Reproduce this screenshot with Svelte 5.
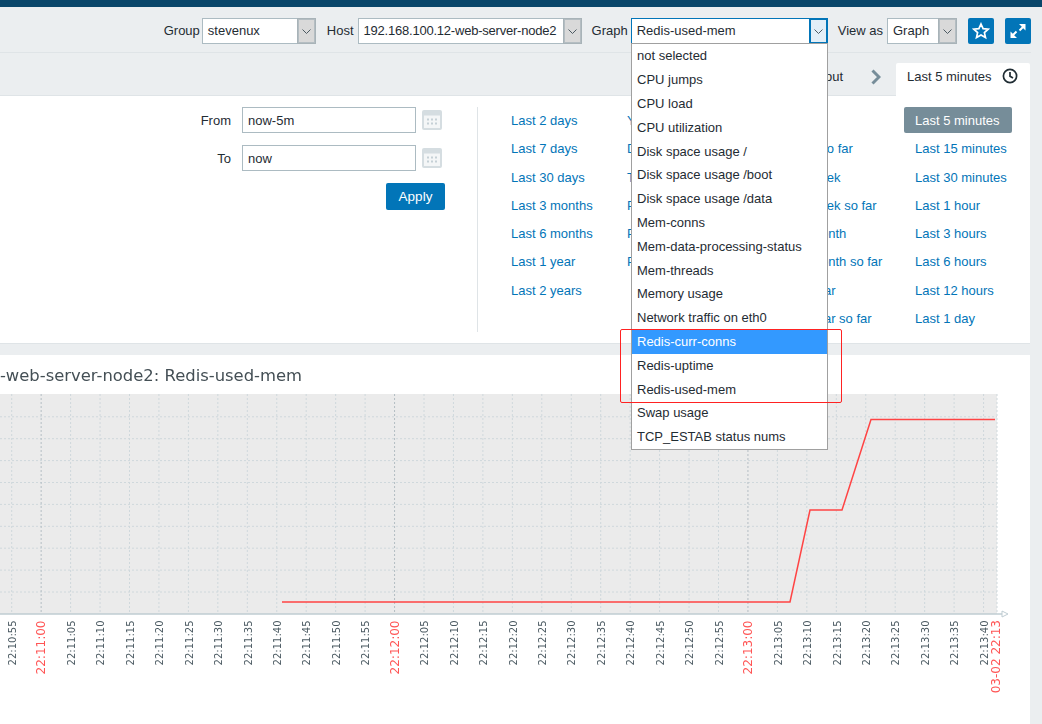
<script lang="ts">
  const graphs = [
    "not selected", "CPU jumps", "CPU load", "CPU utilization", "Disk space usage /",
    "Disk space usage /boot", "Disk space usage /data", "Mem-conns", "Mem-data-processing-status",
    "Mem-threads", "Memory usage", "Network traffic on eth0", "Redis-curr-conns",
    "Redis-uptime", "Redis-used-mem", "Swap usage", "TCP_ESTAB status nums",
  ];

  const quick = [
    ["Last 2 days", "Last 7 days", "Last 30 days", "Last 3 months", "Last 6 months", "Last 1 year", "Last 2 years"],
    ["Yesterday", "Day before yesterday", "This day last week", "Previous week", "Previous month", "Previous year"],
    ["Today", "Today so far", "This week", "This week so far", "This month", "This month so far", "This year", "This year so far"],
    ["Last 5 minutes", "Last 15 minutes", "Last 30 minutes", "Last 1 hour", "Last 3 hours", "Last 6 hours", "Last 12 hours", "Last 1 day"],
  ];

  // Graph coordinates below are page coordinates, the svg viewBox starts at y=355
  const step = 29.45;
  const ticks = Array.from({ length: 34 }, (_, i) => {
    const total = 10 * 60 + 55 + i * 5;
    const m = Math.floor(total / 60);
    const s = total % 60;
    const label = `22:${String(m).padStart(2, "0")}:${String(s).padStart(2, "0")}`;
    return { x: 11.7 + i * step, label, major: s === 0 };
  });
  const rows = Array.from({ length: 9 }, (_, i) => 416.8 + i * 21.9);
  const line = "282,602 790,602 810,510 842,510 871,419.5 995,419.5";
</script>

<div class="page">
  <div class="topbar"></div>

  <header class="filter">
    <div class="field group-field">
      <span>Group</span>
      <div class="select group"><span class="value">stevenux</span><span class="arrow"><svg width="9" height="5" viewBox="0 0 9 5"><path d="M.5.5l4 4 4-4" /></svg></span></div>
    </div>
    <div class="field host-field">
      <span>Host</span>
      <div class="select host"><span class="value tight">192.168.100.12-web-server-node2</span><span class="arrow"><svg width="9" height="5" viewBox="0 0 9 5"><path d="M.5.5l4 4 4-4" /></svg></span></div>
    </div>
    <div class="field graph-field">
      <span>Graph</span>
      <div class="select graph focus"><span class="value">Redis-used-mem</span><span class="arrow"><svg width="9" height="5" viewBox="0 0 9 5"><path d="M.5.5l4 4 4-4" /></svg></span></div>
    </div>
    <div class="field host-field">
      <span>View as</span>
      <div class="select view"><span class="value">Graph</span><span class="arrow"><svg width="9" height="5" viewBox="0 0 9 5"><path d="M.5.5l4 4 4-4" /></svg></span></div>
    </div>
    <button class="icon-btn star" aria-label="Add to favourites">
      <svg width="18" height="18" viewBox="0 0 18 18"><path d="M9 2l2.1 4.7 5.1.5-3.8 3.4 1.1 5L9 13l-4.5 2.6 1.1-5L1.8 7.2l5.1-.5z" /></svg>
    </button>
    <button class="icon-btn" aria-label="Fullscreen">
      <svg width="18" height="18" viewBox="0 0 18 18"><path class="solid" d="M10 2h6.5v6.500l-2.300-2.300-3 3-1.400-1.400 3-3zM8 16H1.500V9.500l2.300 2.300 3-3 1.400 1.400-3 3z" /></svg>
    </button>
  </header>

  <nav class="tabs">
    <span class="zoom-out">Zoom out</span>
    <svg class="chevron" width="10" height="16" viewBox="0 0 10 16"><path d="M1.5 1.5L8 8l-6.5 6.5" /></svg>
    <div class="tab">
      <span>Last 5 minutes</span>
      <svg width="16" height="16" viewBox="0 0 16 16"><circle cx="8" cy="8" r="6.6" /><path d="M8 4v4.300l3 1.800" /></svg>
    </div>
  </nav>

  <section class="time-panel">
    <form class="range" onsubmit={(e) => e.preventDefault()}>
      <div class="range-row">
        <label for="from">From</label>
        <input id="from" value="now-5m" />
        <span class="cal"><svg width="20" height="20" viewBox="0 0 20 20"><rect width="20" height="20" rx="2" fill="#d5dde1" /><rect x="2" y="5.5" width="16" height="12.5" fill="#f4f6f7" /><path d="M5 8.5h2v2H5zM9 8.5h2v2H9zM13 8.5h2v2h-2zM5 12.5h2v2H5zM9 12.5h2v2H9zM13 12.5h2v2h-2z" fill="#c5d0d6" /></svg></span>
      </div>
      <div class="range-row">
        <label for="to">To</label>
        <input id="to" value="now" />
        <span class="cal"><svg width="20" height="20" viewBox="0 0 20 20"><rect width="20" height="20" rx="2" fill="#d5dde1" /><rect x="2" y="5.5" width="16" height="12.5" fill="#f4f6f7" /><path d="M5 8.5h2v2H5zM9 8.5h2v2H9zM13 8.5h2v2h-2zM5 12.5h2v2H5zM9 12.5h2v2H9zM13 12.5h2v2h-2z" fill="#c5d0d6" /></svg></span>
      </div>
      <button class="apply">Apply</button>
    </form>
    <div class="quick">
      {#each quick as col}
        <ul>
          {#each col as item}
            <li class:current={item === "Last 5 minutes"}>{item}</li>
          {/each}
        </ul>
      {/each}
    </div>
  </section>

  <section class="graph-panel">
    <svg width="1030" height="369" viewBox="0 355 1030 369">
      <text class="title" x="302" y="381" text-anchor="end">-web-server-node2: Redis-used-mem</text>
      <rect x="0" y="394" width="997" height="220" fill="#ebebeb" />
      {#each rows as y}
        <line class="grid" x1="0" x2="997" y1={y} y2={y} />
      {/each}
      {#each ticks as t}
        <line class="grid" class:major={t.major} x1={t.x} x2={t.x} y1="394" y2="614" />
      {/each}
      <line class="grid" x1="997" x2="997" y1="394" y2="614" />
      <line class="axis" x1="0" x2="1002" y1="614" y2="614" />
      <path class="axis-tip" d="M1002 611l6 3-6 3z" />
      <polyline class="series" points={line} />
      {#each ticks as t}
        <text
          class="tick"
          class:major={t.major}
          text-anchor="end"
          transform="translate({t.x + 4.2} 620.5) rotate(-90)">{t.label}</text>
      {/each}
      <text class="tick major" text-anchor="end" transform="translate(1000 620) rotate(-90)">03-02 22:13</text>
    </svg>
  </section>

  <ul class="menu">
    {#each graphs as g, i}
      <li class:hover={i === 12}>{g}</li>
    {/each}
  </ul>
  <div class="note"></div>
</div>

<style>
  :global(body) {
    background: #ebeef0;
    color: #1f2c33;
    font-family: "Liberation Sans", Arial, sans-serif;
    font-size: 13px;
    overflow: hidden;
  }

  .page {
    position: relative;
    width: 1042px;
    height: 724px;
    overflow: hidden;
  }

  .topbar {
    height: 7px;
    background: #0a466a;
  }

  .filter {
    display: flex;
    justify-content: flex-end;
    align-items: center;
    height: 46px;
    margin-right: 11px;
    padding-top: 3px;
    box-sizing: border-box;
    border-bottom: 1px solid #dfe4e7;
  }

  .field {
    display: flex;
    align-items: center;
    gap: 2px;
    margin-right: 10px;
  }

  .field > span {
    margin-bottom: 2px;
  }

  .group-field {
    margin-right: 11px;
  }

  .graph-field {
    gap: 3px;
  }

  .host-field {
    gap: 4px;
  }

  .select {
    display: flex;
    height: 26px;
    box-sizing: border-box;
    border: 1px solid #acbbc2;
    background: #fff;
  }

  .select.group { width: 114px; }
  .select.host { width: 224px; }
  .select.graph { width: 197px; }
  .select.view { width: 70px; }

  .value {
    flex: 1;
    line-height: 23px;
    padding-left: 5px;
    white-space: nowrap;
  }

  .tight {
    letter-spacing: -0.22px;
  }

  .arrow {
    display: flex;
    align-items: center;
    justify-content: center;
    width: 17px;
    margin: -1px -1px -1px 0;
    border: 1px solid #a8b3b8;
    box-shadow: inset 0 0 0 1px #b4bdc2;
    background: #d9d9d9;
  }

  .arrow svg path {
    fill: none;
    stroke: #4c5a62;
  }

  .focus {
    border-color: #0275b8;
  }

  .focus .arrow {
    background: #e3eff8;
    border-color: #0275b8;
    box-shadow: inset 0 0 0 1px #0275b8;
  }

  .icon-btn {
    display: flex;
    align-items: center;
    justify-content: center;
    width: 26px;
    height: 26px;
    padding: 0;
    border: 0;
    border-radius: 2px;
    background: #0275b8;
  }

  .star {
    margin-right: 11px;
    margin-left: 1px;
  }

  .star path {
    fill: none;
    stroke: #fff;
    stroke-width: 1.7;
  }

  .solid {
    fill: #fff;
  }

  .tabs {
    display: flex;
    justify-content: flex-end;
    align-items: flex-end;
    height: 43px;
    box-sizing: border-box;
    margin-right: 12px;
    border-bottom: 1px solid #dfe4e7;
  }

  .zoom-out {
    line-height: 33px;
    margin-right: 28px;
    margin-bottom: 2px;
  }

  .chevron {
    margin-right: 15px;
    margin-bottom: 10px;
  }

  .chevron path {
    fill: none;
    stroke: #768d99;
    stroke-width: 3;
  }

  .tab {
    display: flex;
    align-items: center;
    gap: 10px;
    width: 134px;
    height: 33px;
    box-sizing: border-box;
    padding: 0 0 7px 11px;
    margin-bottom: -1px;
    background: #fff;
    border-radius: 2px 2px 0 0;
  }

  .tab svg {
    fill: none;
    stroke: #1f2c33;
    stroke-width: 1.7;
  }

  .time-panel {
    display: flex;
    height: 248px;
    box-sizing: border-box;
    margin-right: 12px;
    padding-top: 11px;
    background: #fff;
    border-bottom: 1px solid #dfe4e7;
  }

  .range {
    display: flex;
    flex-direction: column;
    align-items: flex-end;
    width: 445px;
    flex: none;
    padding-right: 32px;
  }

  .range-row {
    display: flex;
    align-items: center;
    height: 26px;
    margin-bottom: 12px;
  }

  .range-row label {
    margin-right: 11px;
  }

  .range-row input {
    width: 174px;
    height: 26px;
    box-sizing: border-box;
    padding: 0 5px;
    border: 1px solid #acbbc2;
    outline: none;
    color: inherit;
    font: inherit;
  }

  .cal {
    display: flex;
    width: 29px;
    padding-left: 6px;
    box-sizing: border-box;
  }

  .apply {
    width: 59px;
    height: 27px;
    padding: 0;
    border: 0;
    border-radius: 2px;
    background: #0275b8;
    color: #fff;
    font: inherit;
    font-size: 13.5px;
  }

  .quick {
    display: grid;
    grid-template-columns: 116px 155px 133px auto;
    height: 225px;
    padding-left: 33px;
    border-left: 1px solid #dfe4e7;
  }

  .quick ul {
    margin: 0;
    padding: 0;
    list-style: none;
  }

  .quick li {
    height: 28.25px;
    line-height: 28px;
    color: #0275b8;
    white-space: nowrap;
  }

  .quick li.current {
    width: 108px;
    height: 26px;
    margin: 0 0 2.25px -11px;
    padding-left: 11px;
    box-sizing: border-box;
    border-radius: 2px;
    background: #768d99;
    color: #fff;
  }

  .graph-panel {
    height: 369px;
    margin-top: 11px;
    margin-right: 12px;
    background: #fff;
    overflow: hidden;
  }

  .graph-panel svg {
    display: block;
    filter: blur(0.35px);
  }

  .title {
    font-family: "DejaVu Sans", sans-serif;
    font-size: 16.4px;
    fill: #444f55;
  }

  .grid {
    stroke: #cfd8dc;
    stroke-dasharray: 2 2;
  }

  .grid.major {
    stroke: #b4bec4;
  }

  .axis {
    stroke: #bfccd2;
    stroke-width: 1.5;
  }

  .axis-tip {
    fill: #fff;
    stroke: #bfccd2;
  }

  .series {
    fill: none;
    stroke: #f44;
    stroke-width: 1.5;
  }

  .tick {
    font-family: "DejaVu Sans", sans-serif;
    font-size: 10px;
    fill: #4b5a62;
  }

  .tick.major {
    font-size: 12px;
    fill: #f55;
  }

  .menu {
    position: absolute;
    left: 631px;
    top: 43px;
    width: 197px;
    box-sizing: border-box;
    margin: 0;
    padding: 0.4px 0 0;
    list-style: none;
    border: 1px solid #a0a0a0;
    background: #fff;
  }

  .menu li {
    height: 23.8px;
    line-height: 23.8px;
    padding-left: 5px;
    white-space: nowrap;
  }

  .menu li.hover {
    background: #3399ff;
    color: #fff;
  }

  .note {
    position: absolute;
    left: 620px;
    top: 329px;
    width: 222px;
    height: 74px;
    box-sizing: border-box;
    border: 1px solid #f22;
    border-radius: 2px;
  }
</style>
